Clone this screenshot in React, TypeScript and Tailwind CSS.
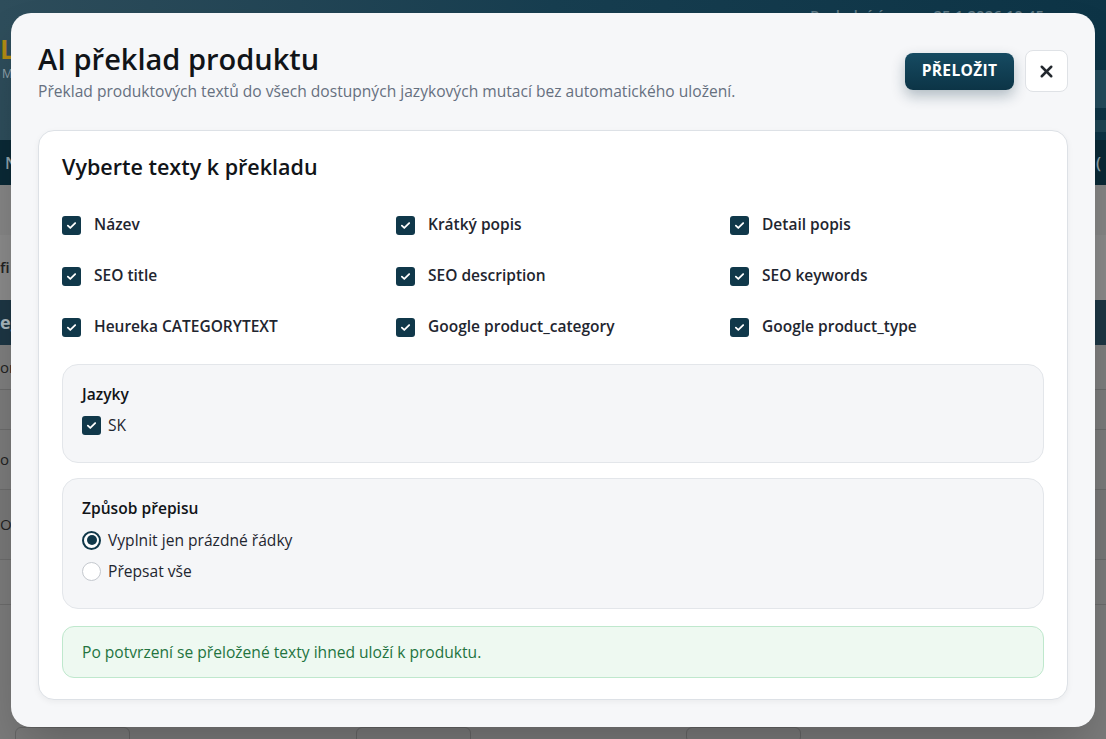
import { X } from "lucide-react";

const fields = [
  "Název",
  "Krátký popis",
  "Detail popis",
  "SEO title",
  "SEO description",
  "SEO keywords",
  "Heureka CATEGORYTEXT",
  "Google product_category",
  "Google product_type",
];

function Check() {
  return (
    <span className="flex h-[19px] w-[19px] shrink-0 items-center justify-center rounded-[3px] bg-[#10384a]">
      <svg viewBox="0 0 16 16" className="h-[13px] w-[13px]" fill="none">
        <path
          d="M3.5 8.2l3 2.8 6-6"
          stroke="white"
          strokeWidth="2.2"
          strokeLinecap="round"
          strokeLinejoin="round"
        />
      </svg>
    </span>
  );
}

function Radio({ checked }: { checked?: boolean }) {
  return checked ? (
    <span className="flex h-[19px] w-[19px] shrink-0 items-center justify-center rounded-full border-2 border-[#10384a] bg-white">
      <span className="h-[10px] w-[10px] rounded-full bg-[#10384a]" />
    </span>
  ) : (
    <span className="h-[19px] w-[19px] shrink-0 rounded-full border border-[#c4c8ce] bg-white" />
  );
}

function Background() {
  return (
    <div className="flex h-full flex-col">
      <div className="relative h-[140px] bg-gradient-to-r from-[#2e4d5b] via-[#173e50] to-[#0d3446]">
        <div className="absolute left-0 top-[36px] text-[26px] font-bold leading-none text-[#b08a14]">
          LO
        </div>
        <div className="absolute left-[2px] top-[68px] text-[12px] leading-none text-[#8fa2ab]">
          M
        </div>
        <div className="absolute left-[810px] top-[4px] whitespace-nowrap text-[15px] font-semibold text-[#5f7a86]">
          Poslední úpravy: 25.1.2026 10:45
        </div>
        <div className="absolute right-0 top-[70px] h-[38px] w-[60px] bg-[#234b5c]" />
        <div className="absolute right-0 top-[120px] h-[12px] w-[60px] bg-[#1f4554]" />
      </div>
      <div className="flex h-[45px] items-center justify-between bg-[#0a2936] px-[5px] text-[16px] font-semibold text-[#8ea1aa]">
        <span>N</span>
        <span>(</span>
      </div>
      <div className="flex flex-1 flex-col bg-[#7b7b7b] text-[15px] text-[#222]">
        <div className="h-[50px] bg-[#858585]" />
        <div className="flex h-[65px] items-center bg-[#8a8a8a] font-semibold">fi</div>
        <div className="flex h-[45px] items-center bg-[#1d3644] text-[18px] font-bold text-[#a9b7bd]">
          eg
        </div>
        <div className="flex h-[45px] items-center border-b border-[#6b6b6b] bg-[#7e7e7e]">
          on
        </div>
        <div className="h-[40px] border-b border-[#6b6b6b]" />
        <div className="flex h-[60px] items-center border-b border-[#6b6b6b]">o</div>
        <div className="flex h-[70px] items-center border-b border-[#6b6b6b] bg-[#787878]">
          Oc
        </div>
        <div className="h-[45px] border-b border-[#6b6b6b]" />
      </div>
    </div>
  );
}

export default function App() {
  return (
    <div
      className="relative h-[739px] w-full overflow-hidden"
      style={{ fontFamily: '"Open Sans", "Noto Sans", sans-serif' }}
    >
      <Background />
      <div className="absolute bottom-[-8px] left-[15px] h-[20px] w-[115px] rounded-md border border-[#666]" />
      <div className="absolute bottom-[-8px] left-[356px] h-[20px] w-[115px] rounded-md border border-[#666]" />
      <div className="absolute bottom-[-4px] left-[686px] h-[16px] w-[115px] rounded-md border border-[#666]" />

      <div className="absolute bottom-[12px] left-[11px] right-[11px] top-[13px] flex flex-col rounded-[20px] bg-[#f6f7f9] px-[27px] pt-[26px] shadow-2xl">
        <div className="flex items-start justify-between">
          <div>
            <h1 className="text-[29px] font-semibold leading-[40px] text-[#111418]">
              AI překlad produktu
            </h1>
            <p className="text-[15.6px] leading-[24px] text-[#667080]">
              Překlad produktových textů do všech dostupných jazykových mutací bez automatického uložení.
            </p>
          </div>
          <div className="mt-[11px] flex items-center gap-[11px]">
            <button className="h-[37px] w-[109px] rounded-lg bg-gradient-to-b from-[#164b62] to-[#0c3446] text-[15.6px] font-bold tracking-[0.3px] text-white shadow-[0_6px_14px_rgba(15,50,70,0.3)]">
              PŘELOŽIT
            </button>
            <button className="flex h-[42px] w-[43px] items-center justify-center rounded-lg border border-[#dfe2e6] bg-white">
              <X className="h-[19px] w-[19px] text-[#23282e]" strokeWidth={3.2} />
            </button>
          </div>
        </div>

        <div className="mt-[27px] rounded-[16px] border border-[#dde1e6] bg-white px-[23px] pb-[21px] pt-[20px] shadow-[0_2px_6px_rgba(0,0,0,0.05)]">
          <h2 className="text-[21.5px] font-semibold leading-[32px] text-[#111418]">
            Vyberte texty k překladu
          </h2>
          <div className="mt-[30px] grid grid-cols-3 gap-x-[20px] gap-y-[27px]">
            {fields.map((f) => (
              <label key={f} className="flex h-[24px] items-center gap-[13px]">
                <Check />
                <span className="text-[15.5px] font-semibold text-[#1f2630]">{f}</span>
              </label>
            ))}
          </div>

          <div className="mt-[25px] rounded-[16px] border border-[#e3e6ea] bg-[#f5f6f8] px-[19px] pb-[25px] pt-[17px]">
            <div className="text-[15.6px] font-semibold leading-[24px] text-[#111418]">Jazyky</div>
            <label className="mt-[7px] flex items-center gap-[7px]">
              <Check />
              <span className="text-[15.6px] leading-[24px] text-[#1f2630]">SK</span>
            </label>
          </div>

          <div className="mt-[15px] rounded-[16px] border border-[#e3e6ea] bg-[#f5f6f8] px-[19px] pb-[25px] pt-[17px]">
            <div className="text-[15.6px] font-semibold leading-[24px] text-[#111418]">
              Způsob přepisu
            </div>
            <div className="mt-[8px] flex flex-col gap-[7px]">
              <label className="flex items-center gap-[7px]">
                <Radio checked />
                <span className="text-[15.6px] leading-[24px] text-[#1f2630]">
                  Vyplnit jen prázdné řádky
                </span>
              </label>
              <label className="flex items-center gap-[7px]">
                <Radio />
                <span className="text-[15.6px] leading-[24px] text-[#1f2630]">Přepsat vše</span>
              </label>
            </div>
          </div>

          <div className="mt-[17px] rounded-[12px] border border-[#bfe8cd] bg-[#eef9f1] px-[19px] py-[13px] text-[15.6px] leading-[24px] text-[#23743f]">
            Po potvrzení se přeložené texty ihned uloží k produktu.
          </div>
        </div>
      </div>
    </div>
  );
}
